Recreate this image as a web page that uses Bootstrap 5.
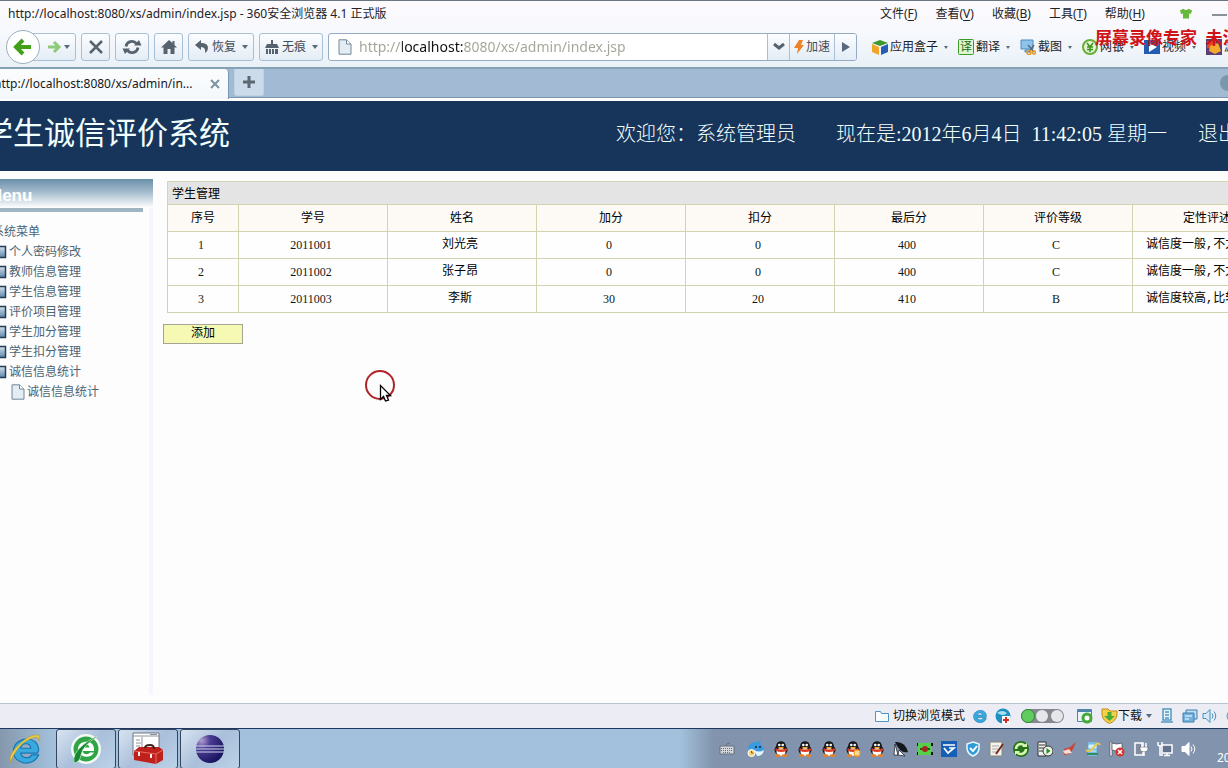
<!DOCTYPE html>
<html lang="zh-CN">
<head>
<meta charset="utf-8">
<meta name="viewport" content="width=device-width, initial-scale=1">
<title>学生诚信评价系统</title>
<link href="https://cdn.jsdelivr.net/npm/bootstrap@5.3.0/dist/css/bootstrap.min.css" rel="stylesheet">
<style>
:root{--ui:"Noto Sans","Noto Sans CJK SC",sans-serif;--page:"Liberation Serif","Noto Sans CJK SC",serif}
body{font:12px/18px var(--ui);color:#1c2226;background:#fff;overflow:hidden;position:relative}
svg{flex:none;display:block}
button{font:inherit;color:inherit}
a{color:inherit;text-decoration:none}
.chrome{background:linear-gradient(#fdfafd,#f7f9fd 45%,#e9f1f7);border-top:1px solid #68777f}
.titlebar{height:26px;padding-left:8px}
.menus{width:348px;gap:18px}
.menus u{text-underline-offset:2px}
.toolbar{height:40px;padding-left:6px;gap:5px}
.tool{height:28px;border:1px solid #a9bfd3;border-radius:3px;background:linear-gradient(#fcfdff,#e3ecf5);color:#3f4c5a;padding:0;display:flex;align-items:center;justify-content:center;gap:2px}
.back{width:34px;height:34px;border-radius:50%;border-color:#9daebd;background:#fff;z-index:1}
.fwd{width:46px;margin-left:-15px;padding-left:10px}
.w-a{width:29px}.w-b{width:34px}.w-c{width:66px}.w-d{width:64px}
.caret{border:3px solid transparent;border-top:4px solid #5c6a78;border-bottom:0;width:6px;flex:none}
.address{height:28px;border:1px solid #94abc4;border-radius:3px;background:#fff;flex:1;min-width:0;overflow:hidden}
.address input{border:0;outline:0;padding:0;margin-left:6px;flex:1;min-width:0;font:14px/24px var(--ui);color:transparent;caret-color:#000;background:linear-gradient(90deg,#a3a397 43px,#111 43px,#111 105px,#a3a397 105px);-webkit-background-clip:text;background-clip:text}
.address .tool{height:26px;border-width:0 0 0 1px;border-radius:0}
.w-e{width:22px}.w-f{width:45px}
.extras{width:366px;padding-left:10px;flex:none}
.extras a{display:flex;align-items:center;gap:2px;margin-right:10px;white-space:nowrap}
.extras .caret{margin-left:4px;border-width:3px 2px 0;width:4px}
.tabs{height:31px;background:#a2bad3;border-top:2px solid #86a1b4;border-bottom:1px solid #7896ae}
.tabs .cur{width:229px;height:30px;background:linear-gradient(#fbfcfd,#f4f8fb);border-right:1px solid #7896ae;border-radius:0 4px 0 0;margin-bottom:-2px}
.tabs .cur a{margin-left:-6px;color:#14181c}
.plus{width:30px;height:27px;border:1px solid #bfd2e4;border-top:0;border-radius:0 0 3px 3px;background:#cbdbea;margin-left:5px}
.edge{width:16px;height:16px;border-radius:50%;background:#7b96af;margin-right:-8px}
.banner{height:70px;background:#17355a;color:#f2ffff;font-family:var(--page);margin-top:3px;padding-bottom:5px;white-space:nowrap}
.banner h1{font:400 31px/40px var(--page);margin:0 0 0 -18px}
.banner .info{width:612px;font-size:20px;line-height:30px;font-weight:300}
.banner .now{white-space:pre;margin-left:40px}
.banner .exit{margin-left:31px}
.workspace{background:#fdfdfe;font-family:var(--page);color:#000}
.side{width:153px;margin:8px 0 8px;border-right:4px solid #f7f6fd;color:#4c6473}
.side h2{font:bold 17px/34px "Liberation Sans",sans-serif;color:#fff;height:29px;margin:0 -4px 0 0;background:linear-gradient(#6a8faa,#a5bccd 45%,#fff);text-indent:-12px}
.rule{height:4px;width:143px;background:#9fb5c2}
.side ul{margin:10px 0 0;padding:0;line-height:20px}
.side li{display:flex;align-items:center;height:20px;white-space:nowrap}
.side .root{margin-left:-8px}
.side .leaf svg{margin:0 2px 0 -7px}
.side .sub{padding-left:10px;gap:1px}
.panel{padding:10px 0 0 10px}
.grades{width:1115px;margin-left:4px;table-layout:fixed;border-collapse:collapse;line-height:26px;color:#101812}
.grades caption{caption-side:top;height:23px;line-height:24px;padding:0 0 0 4px;background:#e4e4e4;border:1px solid #d5d5b4;border-bottom:0;color:#000}
.grades th,.grades td{border:1px solid #d3d3b0;padding:0;height:27px;text-align:center;font-weight:400;white-space:nowrap}
.grades td{padding-right:4px;background:#fefefe}
.grades th{background:#fdfaf5;line-height:26px;color:#000}
.grades .han{font-family:"Liberation Mono","Noto Sans CJK SC",monospace;color:#000}
.grades .note{text-align:left;padding-left:13px}
.grades col:first-child{width:71px}
.add{width:80px;height:20px;line-height:16px;padding:0 0 2px;border:1px solid #a2a693;background:#f5f9b4;margin-top:11px;color:#000}
.status{height:25px;background:#ececf4;border-top:1px solid #b7c5d2}
.status .items{width:353px;white-space:nowrap;color:#111}
.task{height:40px;background:#a3c1dc;border-top:1px solid #1d3761}
.start{width:54px;padding:0 0 0 8px;border:0;background:linear-gradient(90deg,#8597ac,#a3c1dc)}
.app{width:60px;height:40px;margin-left:2px;border:1px solid #33465d;border-radius:3px;background:linear-gradient(135deg,#d8e3f1,#a9bfda 50%,#bcd2e8);display:flex;align-items:center;justify-content:center;padding:0}
.tray{width:548px;padding-left:39px;gap:8px;background:linear-gradient(90deg,#a3c1dc,#8193ad 34px)}
.clock{color:#fff;font-size:12px;margin:18px 0 0 12px;white-space:nowrap}
.stamp{position:absolute;left:1095px;top:29px;color:#cf1416;font:bold 17px/20px var(--page);white-space:pre;z-index:3;pointer-events:none}
.pointer{position:absolute;left:364px;top:369px;z-index:3;pointer-events:none}
</style>
</head>
<body>
<svg width="0" height="0" class="position-absolute" aria-hidden="true">
<symbol id="page" viewBox="0 0 16 16"><path d="M2 .8h7.500L14 5v10.200H2z" fill="#e3edf3" stroke="#70879a"/><path d="M9.500 1v4H14" fill="#fff" stroke="#70879a"/></symbol>
<symbol id="book" viewBox="0 0 14 14"><path d="M1 1.500h11.500v11H1z" fill="url(#bk)" stroke="#243d55" stroke-width="1.500"/></symbol>
<linearGradient id="bk" x1="0" y1="0" x2="0" y2="1"><stop stop-color="#d3e1ec"/><stop offset="1" stop-color="#5c84a9"/></linearGradient>
<symbol id="ie" viewBox="5 4 23 23"><path d="M26 18H12c.5 4 7 5.500 9 1.500h6C23 30 6 28 6 16.500 6 4 27 2 27 16z M12 14h8.500c-.5-5-8-5-8.500 0z" fill="#39a9de" stroke="#1778b4" fill-rule="evenodd"/></symbol>
<symbol id="qq" viewBox="0 0 16 16"><ellipse cx="8" cy="9" rx="6.500" ry="5.500" fill="#17181c"/><circle cx="8" cy="5" r="4.800" fill="#17181c"/><ellipse cx="8" cy="11" rx="4.500" ry="4" fill="#fff"/><path d="M2.500 7q5.500 3 11 0l.5 2.500Q8 12.500 2.500 9.500z" fill="#dc3d22"/><circle cx="6.300" cy="4" r="1.300" fill="#fff"/><circle cx="9.700" cy="4" r="1.300" fill="#fff"/><path d="M4.500 6h7L8 8z" fill="#f5a623"/><ellipse cx="4.500" cy="14.600" rx="3" ry="1.300" fill="#f0801f"/><ellipse cx="11.500" cy="14.600" rx="3" ry="1.300" fill="#f0801f"/></symbol>
<symbol id="speaker" viewBox="0 0 16 16"><path d="M1 5.500h3l4-4v13l-4-4H1z"/><path d="M10 5.500q2 2.500 0 5M12 3.500q3.500 4.500 0 9" fill="none"/></symbol>
</svg>

<div class="d-flex flex-column vh-100">
<header class="chrome flex-shrink-0">
  <div class="titlebar d-flex align-items-center">
    <span class="flex-grow-1 text-nowrap">http://localhost:8080/xs/admin/index.jsp - 360安全浏览器 4.1 正式版</span>
    <nav class="menus d-flex align-items-center text-nowrap overflow-hidden">
      <a href="#">文件(<u>F</u>)</a><a href="#">查看(<u>V</u>)</a><a href="#">收藏(<u>B</u>)</a><a href="#">工具(<u>T</u>)</a><a href="#">帮助(<u>H</u>)</a>
      <svg class="ms-3" width="14" height="16" viewBox="0 0 16 16"><path d="M1 4l4-2q3 3 6 0l4 2-1.500 4-2-.5V13h-7V7.500l-2 .5z" fill="#67b93e"/></svg>
      <svg width="16" height="16" viewBox="0 0 16 16"><path d="M1 9h15" stroke="#8a9299" stroke-width="2"/></svg>
    </nav>
  </div>
  <div class="toolbar d-flex align-items-center">
    <button class="tool back flex-shrink-0" aria-label="后退"><svg width="22" height="22" viewBox="0 0 22 22"><path d="M11 4l-7 7 7 7M4.500 11H19" fill="none" stroke="#41a018" stroke-width="4"/></svg></button>
    <button class="tool fwd flex-shrink-0" aria-label="前进"><svg width="16" height="16" viewBox="0 0 16 16"><path d="M8 3l5 5-5 5M13 8H2" fill="none" stroke="#8dcb78" stroke-width="3"/></svg><span class="caret"></span></button>
    <button class="tool w-a flex-shrink-0" aria-label="停止"><svg width="18" height="18" viewBox="0 0 18 18"><path d="M3 3l12 12M15 3L3 15" stroke="#56636f" stroke-width="2.500"/></svg></button>
    <button class="tool w-b flex-shrink-0" aria-label="刷新"><svg width="20" height="18" viewBox="0 0 20 18"><path d="M4 8.500a6 6 0 0 1 10.500-3M16 9.500a6 6 0 0 1-10.500 3" fill="none" stroke="#56636f" stroke-width="2.800"/><path d="M12 7.500h7.500L17 2zM.5 10.500H8L3 16z" fill="#56636f"/></svg></button>
    <button class="tool w-a flex-shrink-0" aria-label="主页"><svg width="18" height="18" viewBox="0 0 18 18"><path d="M9 2L1 9.500h2.500V16h4v-5h3v5h4V9.500H17l-2.500-2.400V3h-2v2z" fill="#56636f"/></svg></button>
    <button class="tool w-c flex-shrink-0"><svg width="16" height="16" viewBox="0 0 16 16"><path d="M7 1v3q7 0 7 5 0 3-3 5 1-6-4-6v3L1 6z" fill="#56636f"/></svg>恢复<span class="caret ms-1"></span></button>
    <button class="tool w-d flex-shrink-0"><svg width="16" height="16" viewBox="0 0 16 16"><path d="M7 1h2v4h4l2 4H1l2-4h4zM2 10h2v5H2zM5 10h2v5H5zM8 10h2v5H8zM11 10h3v5h-3z" fill="#56636f"/></svg>无痕<span class="caret ms-1"></span></button>
    <div class="address d-flex align-items-center ps-2"><svg width="16" height="16"><use href="#page"/></svg>
      <input type="text" aria-label="地址" value="http://localhost:8080/xs/admin/index.jsp">
      <button class="tool w-e flex-shrink-0" aria-label="历史地址"><svg width="14" height="10" viewBox="0 0 14 10"><path d="M2 2l5 4 5-4" fill="none" stroke="#56636f" stroke-width="3"/></svg></button>
      <button class="tool w-f flex-shrink-0"><svg width="10" height="16" viewBox="0 0 10 16"><path d="M5 1h4L7 6h3L3 15l1-6H0z" fill="#ef8127"/></svg>加速</button>
      <button class="tool w-e flex-shrink-0" aria-label="转到"><svg width="10" height="12" viewBox="0 0 10 12"><path d="M1 1l8 5-8 5z" fill="#586a7d"/></svg></button>
    </div>
    <nav class="extras d-flex overflow-hidden">
      <a href="#"><svg width="16" height="16" viewBox="0 0 16 16"><path d="M0 4l8-3 8 3-8 3z" fill="#3f9730"/><path d="M0 5l7 3v8l-7-3z" fill="#eea52a"/><path d="M16 5L9 8v8l7-3z" fill="#285db5"/></svg>应用盒子<span class="caret"></span></a>
      <a href="#"><svg width="16" height="16" viewBox="0 0 16 16"><rect x=".5" y=".5" width="15" height="15" rx="1" fill="#dff5cf" stroke="#3b9b27"/><text x="2" y="12" font-size="12" fill="#1d6c13">译</text></svg>翻译<span class="caret"></span></a>
      <a href="#"><svg width="16" height="16" viewBox="0 0 16 16"><path d="M1 1h12v9H1zM5 11h5v2H5z" fill="#8ec4ea" stroke="#4b8dc5"/><path d="M8 6l6 7M14 6l-5 7" stroke="#536b85" stroke-width="1.500"/><circle cx="9" cy="13.500" r="2" fill="none" stroke="#e79a27" stroke-width="1.500"/><circle cx="14" cy="13.500" r="1.500" fill="none" stroke="#e79a27" stroke-width="1.500"/></svg>截图<span class="caret"></span></a>
      <a href="#"><svg width="16" height="16" viewBox="0 0 16 16"><circle cx="8" cy="8" r="7" fill="#e4f5d4" stroke="#68ae36" stroke-width="2"/><path d="M5 4l3 4 3-4M8 8v5M5 8h6M5 10.500h6" fill="none" stroke="#3d941f" stroke-width="1.500"/></svg>网银<span class="caret"></span></a>
      <a href="#"><svg width="16" height="16" viewBox="0 0 16 16"><path d="M0 1h16v14H0z" fill="#245cb3"/><path d="M5 4l8 4-8 5z" fill="#fff"/></svg>视频<span class="caret"></span></a>
      <a href="#"><svg width="16" height="16" viewBox="0 0 16 16"><path d="M0 0h16v16H0z" fill="#5a3f78"/><path d="M1 2h9v7H1z" fill="#e9452b"/><path d="M4 7l8-3 3 8-6 3-6-3z" fill="#f3a92d"/></svg>游戏</a>
    </nav>
  </div>
</header>
<div class="tabs d-flex justify-content-between flex-shrink-0">
  <div class="d-flex"><div class="cur d-flex align-items-center justify-content-between pe-2 text-nowrap"><a href="#">http://localhost:8080/xs/admin/in...</a><svg width="10" height="10" viewBox="0 0 10 10"><path d="M1 1l8 8M9 1L1 9" stroke="#7e929f" stroke-width="2"/></svg></div>
  <button class="plus p-0 d-flex align-items-center justify-content-center" aria-label="新标签"><svg width="14" height="14" viewBox="0 0 14 14"><path d="M7 1v12M1 7h12" stroke="#5b6872" stroke-width="3"/></svg></button></div>
  <span class="edge align-self-center"></span>
</div>
<div class="banner d-flex align-items-center justify-content-between flex-shrink-0">
  <h1>学生诚信评价系统</h1>
  <div class="info d-flex overflow-hidden"><span>欢迎您：系统管理员</span><span class="now">现在是:2012年6月4日  11:42:05 星期一</span><a href="#" class="exit">退出</a></div>
</div>
<main class="workspace d-flex flex-grow-1 overflow-hidden">
  <aside class="side flex-shrink-0">
    <h2>Menu</h2><div class="rule"></div>
    <ul class="list-unstyled">
      <li class="root">系统菜单</li>
      <li class="leaf"><svg width="14" height="14"><use href="#book"/></svg><a href="#">个人密码修改</a></li>
      <li class="leaf"><svg width="14" height="14"><use href="#book"/></svg><a href="#">教师信息管理</a></li>
      <li class="leaf"><svg width="14" height="14"><use href="#book"/></svg><a href="#">学生信息管理</a></li>
      <li class="leaf"><svg width="14" height="14"><use href="#book"/></svg><a href="#">评价项目管理</a></li>
      <li class="leaf"><svg width="14" height="14"><use href="#book"/></svg><a href="#">学生加分管理</a></li>
      <li class="leaf"><svg width="14" height="14"><use href="#book"/></svg><a href="#">学生扣分管理</a></li>
      <li class="leaf"><svg width="14" height="14"><use href="#book"/></svg><a href="#">诚信信息统计</a></li>
      <li class="sub"><svg width="16" height="16"><use href="#page"/></svg><a href="#">诚信信息统计</a></li>
    </ul>
  </aside>
  <section class="panel flex-grow-1 overflow-hidden">
    <table class="grades">
      <caption>学生管理</caption>
      <colgroup><col><col span="7"></colgroup>
      <thead><tr><th>序号</th><th>学号</th><th>姓名</th><th>加分</th><th>扣分</th><th>最后分</th><th>评价等级</th><th>定性评述</th></tr></thead>
      <tbody>
      <tr><td>1</td><td>2011001</td><td class="han">刘光亮</td><td>0</td><td>0</td><td>400</td><td>C</td><td class="han note">诚信度一般,不太稳定</td></tr>
      <tr><td>2</td><td>2011002</td><td class="han">张子昂</td><td>0</td><td>0</td><td>400</td><td>C</td><td class="han note">诚信度一般,不太稳定</td></tr>
      <tr><td>3</td><td>2011003</td><td class="han">李斯</td><td>30</td><td>20</td><td>410</td><td>B</td><td class="han note">诚信度较高,比较稳定</td></tr>
      </tbody>
    </table>
    <button class="add">添加</button>
  </section>
</main>
<div class="status d-flex justify-content-end flex-shrink-0">
  <div class="items d-flex align-items-center overflow-hidden">
    <svg class="me-1" width="14" height="12" viewBox="0 0 14 12"><path d="M.5 1.500h5l1 2h7v8H.5z" fill="#f8fcff" stroke="#4f93c8"/></svg>切换浏览模式
    <svg class="ms-2" width="14" height="14"><use href="#ie"/></svg>
    <svg class="ms-2" width="16" height="16" viewBox="1 1 16 16"><circle cx="9" cy="9" r="7.500" fill="#1e8fc0"/><path d="M3 6q5-4 10 0-3 4-10 0z" fill="#a6e0f2"/><path d="M8 9h8v8H8z" fill="#fff"/><path d="M12 10v6M9 13h6" stroke="#d92a27" stroke-width="2"/></svg>
    <svg class="mx-2" width="46" height="16" viewBox="0 0 46 16"><rect x="2" y="1" width="43" height="14" rx="7" fill="#85898e"/><circle cx="9" cy="8" r="6.500" fill="#62cb60" stroke="#2c8b35"/><circle cx="23" cy="8" r="6" fill="#e5e7ea"/><circle cx="38" cy="8" r="6" fill="#e5e7ea"/></svg>
    <svg class="mx-1" width="16" height="16" viewBox="0 0 16 16"><path d="M.5 1.500h14v12H.5z" fill="#e9f4fa" stroke="#5184ab"/><path d="M1 3h14" stroke="#5184ab" stroke-width="2"/><circle cx="10" cy="10" r="4" fill="#fff" stroke="#44a937" stroke-width="3"/></svg>
    <svg class="ms-1" width="17" height="16" viewBox="0 0 17 16"><path d="M1 1h6l2 2h7v4q-1 6-7.500 8.500Q2 13 1 7z" fill="#f4cf48" stroke="#c38b14"/><path d="M6.500 4h4v4H14l-5.500 5L3 8h3.500z" fill="#4aaa39"/></svg>下载<span class="caret ms-1"></span>
    <svg class="ms-2 me-1" width="14" height="16" viewBox="0 0 14 16"><path d="M3 1h8v11H3zM1 14h12M5 4h4M5 7h4M5 10h4" fill="#e7f3fa" stroke="#5596bf" stroke-width="1.500"/></svg>
    <svg class="ms-1" width="16" height="16" viewBox="0 0 16 16"><path d="M4 2h11v9H4z" fill="#bfe0f2" stroke="#3c7dab"/><path d="M1 5h11v9H1z" fill="#73b2dc" stroke="#3c7dab"/><path d="M3 8h7M3 11h4" stroke="#fff"/></svg>
    <svg class="ms-1" width="16" height="16" fill="#d5eaf6" stroke="#4a8ebb"><use href="#speaker"/></svg>
    <svg class="ms-2" width="14" height="14" viewBox="0 0 14 14"><circle cx="7" cy="7" r="6" fill="#e7f3fa" stroke="#5596bf"/></svg>
  </div>
</div>
<footer class="task d-flex justify-content-between flex-shrink-0">
  <div class="d-flex">
    <button class="start" aria-label="Internet Explorer"><svg width="34" height="34" viewBox="0 0 32 32"><use href="#ie" x="4" y="4" width="26" height="26"/><path d="M3 29Q-1 24 9 13 21 1 29 3q2 1 0 5 0-4-4-3Q14 8 7 19q-5 8-4 10z" fill="#edcf42" stroke="#b99622" stroke-width=".5"/></svg></button>
    <button class="app" aria-label="360安全浏览器"><svg width="32" height="32" viewBox="0 0 32 32"><circle cx="16" cy="16" r="15" fill="#f3faf4"/><circle cx="16" cy="16" r="12.500" fill="#2fa545"/><path d="M24 18H12.500c1 4 6 4 7.500 1.500h4C21 26 8 25 8 16 8 7 24 6 24 16z M12.500 14.500h7c-.5-4-6.500-4-7 0z" fill="#fff" fill-rule="evenodd"/><path d="M4 30Q2 21 13 12 23 4 28 3 12 13 11 22q-1 7-7 8z" fill="#168831" stroke="#c4edc7" stroke-width=".7"/></svg></button>
    <button class="app" aria-label="工具箱"><svg width="32" height="34" viewBox="0 0 32 34"><path d="M1 1h26v22H1z" fill="#fff" stroke="#6e7884"/><path d="M1 4h26M18 2.500h7M4 8h4M4 11h5M4 14h4M10 5v14" stroke="#8a949e"/><path d="M2 19l5-4h20l4 3v10l-7 4-22-4z" fill="#bf201c"/><path d="M2 19l22 3 7-4M24 22v10" stroke="#e96a5e" fill="none"/><path d="M13 16q0-3 5-3 4 0 4 4" fill="none" stroke="#422" stroke-width="2"/><path d="M7 20v4M19 22v4" stroke="#eee" stroke-width="2"/></svg></button>
    <button class="app" aria-label="Eclipse"><svg width="30" height="30" viewBox="0 0 30 30"><defs><radialGradient id="ec" cx=".2" cy=".2" r=".9"><stop stop-color="#b3a0d0"/><stop offset=".35" stop-color="#4a3c92"/><stop offset="1" stop-color="#17125c"/></radialGradient></defs><circle cx="15" cy="15" r="14" fill="url(#ec)"/><path d="M1 12h28M1 15h28M1 18h28" stroke="#ccd5ef" stroke-width="1.200"/></svg></button>
  </div>
  <div class="tray d-flex align-items-center overflow-hidden">
    <svg class="me-1" width="16" height="14" viewBox="0 0 16 14"><path d="M1 4h14v8H1z" fill="#d4d8dc" stroke="#66717e"/><path d="M2 6.500h12M2 8.500h12M4 10.500h8" stroke="#66717e" stroke-dasharray="1 1"/><path d="M7 4q0-3 4-3" stroke="#66717e" fill="none"/></svg>
    <svg width="18" height="16" viewBox="0 0 18 16"><path d="M1 9Q1 1 9 1l5-1-1 3q5 3 4 7-2 5-8 5-8 0-8-6z" fill="#3c9be0"/><path d="M7 9q5 3 10 0-1 6-7 6z" fill="#e4f4fb"/><circle cx="9" cy="6" r="1" fill="#123"/><circle cx="13" cy="6" r="1" fill="#123"/><circle cx="4.500" cy="12" r="3.500" fill="#f6d26c" stroke="#fff"/><path d="M4.500 10v2h2" stroke="#a05a10" fill="none"/></svg>
    <svg class="ms-n1" width="16" height="16"><use href="#qq"/></svg>
    <svg width="16" height="16"><use href="#qq"/></svg>
    <svg width="16" height="16"><use href="#qq"/></svg>
    <svg width="16" height="16" viewBox="0 0 16 16"><use href="#qq"/><circle cx="12" cy="12" r="3.500" fill="#f3ad37"/><path d="M10 11h4M10 13h4" stroke="#fff"/></svg>
    <svg width="16" height="16"><use href="#qq"/></svg>
    <svg width="16" height="16" viewBox="0 0 16 16"><path d="M2 1q10-1 13 10-8 2-13-10z" fill="#14171b"/><path d="M2 3l3 11H1z M6 9l6 6-7-1z" stroke="#14171b" stroke-width=".7" fill="#fff"/></svg>
    <svg width="16" height="16" viewBox="0 0 16 16"><path d="M1 2h14v12H1z" fill="#56cf4a"/><path d="M3 8h10" stroke="#252" stroke-width="2"/><circle cx="8" cy="8" r="3" fill="#a72520"/><path d="M0 2v3M15 2v3M0 11v3M15 11v3" stroke="#111" stroke-width="2"/></svg>
    <svg width="16" height="16" viewBox="0 0 16 16"><path d="M0 0h16v16H0z" fill="#175eb6"/><path d="M2 4h12M3 7l4 5 6-5H8" fill="none" stroke="#fff" stroke-width="1.700"/></svg>
    <svg width="16" height="16" viewBox="0 0 16 16"><path d="M8 1l6 2v5q-1 5-6 7-5-2-6-7V3z" fill="#2c9bd8" stroke="#e7f7ff" stroke-width="1.500"/><path d="M5 7l3 3 4-5" fill="none" stroke="#fff" stroke-width="2"/></svg>
    <svg width="16" height="16" viewBox="0 0 16 16"><path d="M1 1h12v14H1z" fill="#f4f2ec" stroke="#887"/><path d="M3 5h7M3 8h6M3 11h5" stroke="#aaa"/><path d="M14 3L7 13" stroke="#702a1d" stroke-width="2"/></svg>
    <svg width="16" height="16" viewBox="0 0 16 16"><circle cx="8" cy="8" r="8" fill="#26731c"/><path d="M3 8a5 5 0 0 1 9-3M13 8a5 5 0 0 1-9 3" fill="none" stroke="#d8f7b0" stroke-width="2.500"/><path d="M9 6h5V2zM7 10H2v4z" fill="#d8f7b0"/></svg>
    <svg width="16" height="16" viewBox="0 0 16 16"><path d="M1 1h8v14H1z" fill="#f2f2ee" stroke="#333"/><path d="M2 4h6M2 7h6M2 10h4" stroke="#333"/><circle cx="11" cy="10" r="5" fill="#edf5e8" stroke="#333"/><path d="M9.500 7l4 3-4 3z" fill="#2a8b25"/></svg>
    <svg width="16" height="16" viewBox="0 0 16 16"><path d="M3 8l6-2 6-5-3 7-3 5-6 1z" fill="#c84838"/><path d="M2 10l6-2 3 4-7 1z" fill="#f3dcd5"/></svg>
    <svg width="16" height="16" viewBox="0 0 16 16"><path d="M3 1h9v14H3z" fill="#77bde3"/><path d="M4 4h7v3H4zM4 10h7" fill="#d8f0f8" stroke="#d8f0f8"/><path d="M1 9q4 3 8-3t6-2" fill="none" stroke="#e8c64f" stroke-width="2"/><path d="M2 13h11" stroke="#318e58" stroke-width="2"/></svg>
    <svg width="16" height="16" viewBox="0 0 16 16"><path d="M1 1h2v14H1z" fill="#fff" stroke="#333" stroke-width=".5"/><path d="M3 2q4 2 10 0v7q-5 2-10 0z" fill="#fff" stroke="#445" stroke-width=".7"/><circle cx="11" cy="11" r="4.500" fill="#d3352c"/><path d="M9 9l4 4M13 9l-4 4" stroke="#fff" stroke-width="1.500"/></svg>
    <svg width="16" height="16" viewBox="0 0 16 16"><path d="M2 2h8v12H2z" fill="#818ea0" stroke="#fff" stroke-width="1.500"/><path d="M7 6h8v2q0 3-4 3t-4-3z" fill="#fff" stroke="#4a5766" stroke-width=".6"/><path d="M9 2v4M13 2v4M11 11v4" stroke="#fff" stroke-width="1.500"/></svg>
    <svg width="16" height="16" viewBox="0 0 16 16"><path d="M5 4h10v8H5zM7 14.500h6M10 12v2" fill="#60738b" stroke="#fff" stroke-width="1.500"/><path d="M1 1v3q2 2 4 0V1M3 5v9h3" fill="none" stroke="#fff" stroke-width="1.500"/></svg>
    <svg width="16" height="16" fill="#fff" stroke="#fff"><use href="#speaker"/></svg>
    <span class="clock">2012/6/4</span>
  </div>
</footer>
</div>
<span class="stamp">屏幕录像专家  未注册</span>
<svg class="pointer" width="34" height="38" viewBox="0 0 34 38"><circle cx="16" cy="16" r="14" fill="none" stroke="#b02226" stroke-width="2"/><path d="M16.500 16.500v14l3-3 2 4.500 3-1-2-4.500h4z" fill="#fff" stroke="#000" stroke-width="1.300"/></svg>
<script src="https://cdn.jsdelivr.net/npm/bootstrap@5.3.0/dist/js/bootstrap.bundle.min.js"></script>
</body>
</html>
